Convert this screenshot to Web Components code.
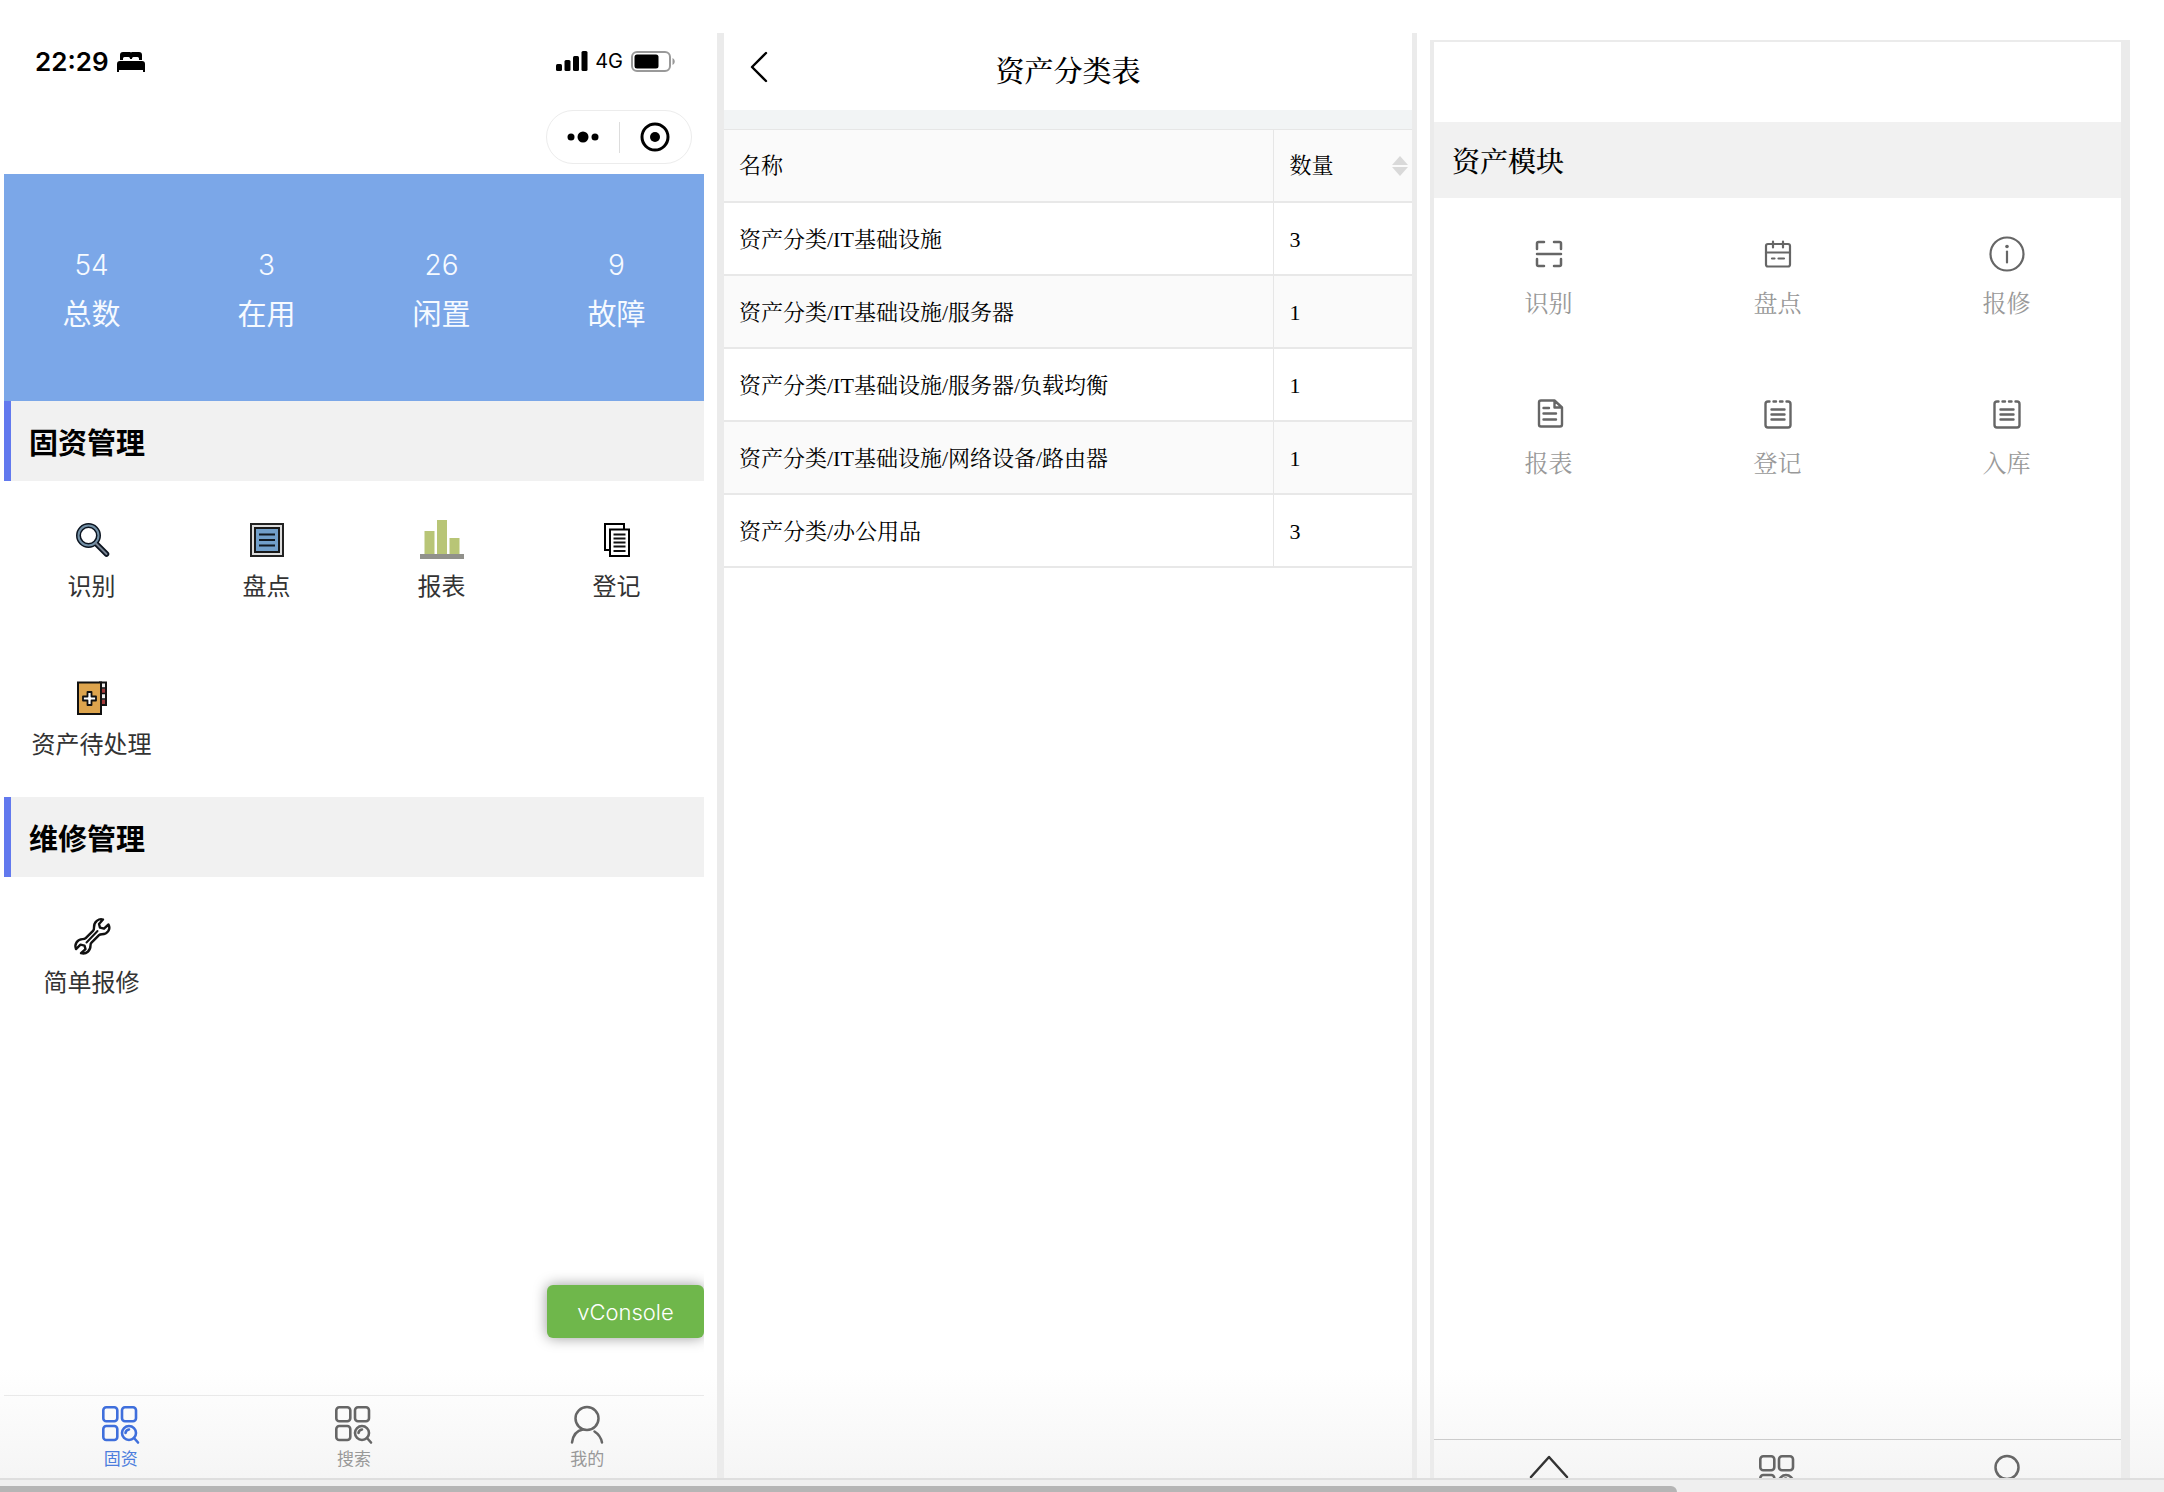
<!DOCTYPE html>
<html lang="zh-CN">
<head>
<meta charset="utf-8">
<title>固资管理</title>
<style>
  html, body { margin: 0; height: 100%; }
  body {
    background: #fff; color: #000; overflow: hidden;
    --sans: "Liberation Sans", "Noto Sans CJK SC", sans-serif;
    --ui: Inter, "Noto Sans CJK SC", sans-serif;
    --serif: "Liberation Serif", "Noto Serif CJK SC", "Noto Sans CJK SC", serif;
    font-family: var(--sans);
  }
</style>
</head>
<body>
<asset-board>
  <phone-home></phone-home>
  <category-report></category-report>
  <asset-modules></asset-modules>
</asset-board>

<script>
const define = (name, html, setup) => {
  const tpl = document.createElement('template');
  tpl.innerHTML = html;
  customElements.define(name, class extends HTMLElement {
    constructor() {
      super();
      this.attachShadow({ mode: 'open' }).append(tpl.content.cloneNode(true));
    }
    connectedCallback() { if (setup) setup(this, this.shadowRoot); }
  });
};

const apps = `<g fill="none" stroke="currentColor" stroke-width="2.6"><rect x="2.300" y="3.300" width="14" height="14" rx="3"/><rect x="21" y="3.300" width="14" height="14" rx="3"/><rect x="2.300" y="22" width="14" height="14" rx="3"/><circle cx="28" cy="29" r="7"/><path d="M33 34l4 4.500M24.500 29a4 4 0 0 1 3.500-3.500" stroke-linecap="round"/></g>`;
const clip = `<g fill="none" stroke="#666" stroke-width="2.400" stroke-linecap="round"><path d="M11.500 7.500H10a2.500 2.500 0 0 0-2.500 2.500v21A2.500 2.500 0 0 0 10 33.500h20a2.500 2.500 0 0 0 2.500-2.500V10A2.500 2.500 0 0 0 30 7.500h-1.500M15.500 7.500h2.500M22 7.500h2.500M13.500 15.500h13M13.500 20.500h13M13.500 25.500h13"/></g>`;
const ICONS = {
  search: `<g fill="none" stroke-linecap="round"><circle cx="16.500" cy="15.500" r="10" stroke="#0b1420" stroke-width="5"/><path d="M24 23.500l10.500 10.500" stroke="#0b1420" stroke-width="5.500"/><circle cx="16.500" cy="15.500" r="10" stroke="#7390a6" stroke-width="2"/><path d="M24 23.500l10.500 10.500" stroke="#778291" stroke-width="2"/></g>`,
  stock: `<rect x="4" y="4" width="32" height="32" fill="#ddd" stroke="#222" stroke-width="2"/><rect x="8" y="8" width="24" height="24" fill="#719fca" stroke="#181818" stroke-width="2"/><path d="M12 14.500h16M12 20h16M12 25.500h16" stroke="#101820" stroke-width="2"/>`,
  bars: `<path d="M2.500 11h10v24h-10zM15 0h10v35H15zM27.500 18h10v17h-10z" fill="#b8c576"/><path d="M-2 34h44v5H-2z" fill="#91918b"/>`,
  copy: `<path d="M8 4h19v26H8z" fill="#fff" stroke="#000" stroke-width="2"/><path d="M13 9.500h19V36H13z" fill="#fff" stroke="#000" stroke-width="2"/><path d="M16.500 14.500h12M16.500 18.500h12M16.500 22.500h12M16.500 26.500h12M16.500 31h12" stroke="#111" stroke-width="2"/>`,
  book: `<path d="M28 4.500h6V27h-6z" fill="#eee" stroke="#111" stroke-width="2"/><path d="M29 10.500h4V15h-4zM29 21.500h4V26h-4z" fill="#a43c3c"/><path d="M28 10h6M28 15.500h6M28 21h6" stroke="#111" stroke-width="1.600"/><path d="M6 4.500h23V36H6z" fill="#dda44d" stroke="#111" stroke-width="2"/><path d="M15.500 14h4v4.500H24v4h-4.500V27h-4v-4.500H11v-4h4.500z" fill="#fff" stroke="#111" stroke-width="1.800" stroke-linejoin="round"/>`,
  wrench: `<g fill="#fff" stroke="#111" stroke-width="2.400" stroke-linejoin="round" stroke-linecap="round"><path d="M31 3.500c-4-1.500-9.500 2.500-9 8 .1 1.500-.2 2.500-1 3.300l-7.300 7.300c-.8.800-1.800 1-3.200 1-5 0-8.500 5-6.500 10l4.500-4.500 4 1 1 3.500-4.500 4c5.500 1.500 9.500-2.500 9.500-7.500 0-1.200.3-2.200 1-2.900l7.500-7.500c.8-.8 1.800-1 3-1 5.500 0 9-5 6.500-9.700l-4.500 4.200-4-1-1-3.700z"/><path d="M14.500 26.500l11-11.500" stroke-width="2"/></g>`,
  apps,
  user: `<g fill="none" stroke="#666" stroke-width="2.500" stroke-linecap="round"><circle cx="20" cy="14.500" r="11.500"/><path d="M5 38.500c1-7.500 5-12 11-13M27.500 27.500c4 2.500 6.500 6 7.500 11"/></g>`,
  scan: `<g fill="none" stroke="#666" stroke-width="2.500" stroke-linecap="round"><path d="M15 8H9.500A1.500 1.500 0 0 0 8 9.500V15M25 8h5.500A1.500 1.500 0 0 1 32 9.500V15M8 25v5.500A1.500 1.500 0 0 0 9.500 32H15M32 25v5.500a1.500 1.500 0 0 1-1.500 1.500H25M8 20h24"/></g>`,
  calendar: `<g fill="none" stroke="#666" stroke-width="2.200" stroke-linecap="round"><rect x="8" y="10" width="24" height="22.500" rx="2"/><path d="M8 18.500h24M15 7.500v6M25 7.500v6M14 24.500h2.500M20.500 24.500h5.500"/></g>`,
  info: `<circle cx="20" cy="20" r="16.500" fill="none" stroke="#666" stroke-width="2.200"/><circle cx="20" cy="12.500" r="1.800" fill="#666"/><path d="M20 17.500v11" stroke="#666" stroke-width="2.200" stroke-linecap="round"/>`,
  report: `<g fill="none" stroke="#666" stroke-width="2.400" stroke-linecap="round" stroke-linejoin="round"><path d="M25.500 6.500H12A2 2 0 0 0 10 8.500v22a2 2 0 0 0 2 2h19a2 2 0 0 0 2-2V13.500zM25.500 6.500v7H33M14.500 14h5.500M14.500 19.500h12.500M14.500 25.500h12.500"/></g>`,
  register: clip, inbound: clip,
  home: `<g fill="none" stroke="#333" stroke-width="2.500" stroke-linecap="round" stroke-linejoin="round"><path d="M2 24L20 4 38 24"/><path d="M5.500 30v10M34.500 30v10"/></g>`,
  bed: `<path d="M3 10V5a3 3 0 0 1 3-3h7a2 2 0 0 1 1 .5A2 2 0 0 1 15 2h7a3 3 0 0 1 3 3v5h-3V8.500A1.500 1.500 0 0 0 20.500 7h-4A1.500 1.500 0 0 0 15 8.500V9h-2v-.5A1.500 1.500 0 0 0 11.500 7h-4A1.500 1.500 0 0 0 6 8.500V10zM3 11h22a3 3 0 0 1 3 3v8h-2v-2H2v2H0v-8a3 3 0 0 1 3-3z"/>`,
  signal: `<rect x="0" y="13" width="6" height="7" rx="1.500"/><rect x="8.500" y="9" width="6" height="11" rx="1.500"/><rect x="17" y="5" width="6" height="15" rx="1.500"/><rect x="25.500" y="0" width="6" height="20" rx="1.500"/>`,
  battery: `<rect x="1" y="1" width="38" height="19" rx="5" fill="none" stroke="#999" stroke-width="2"/><rect x="3.500" y="3.500" width="24" height="14" rx="2.500"/><path d="M41.500 7c3 1.500 3 5.500 0 7z" fill="#999"/>`,
  dots: `<circle cx="4" cy="6" r="3.500"/><circle cx="16" cy="6" r="5.500"/><circle cx="28" cy="6" r="3.500"/>`,
  target: `<circle cx="15" cy="15" r="13" fill="none" stroke="#000" stroke-width="3"/><circle cx="15" cy="15" r="5"/>`,
  back: `<path d="M17 2L3 16l14 14" fill="none" stroke="#000" stroke-width="2.400" stroke-linecap="round" stroke-linejoin="round"/>`
};
const BOX = { bed: [28, 22], signal: [32, 20], battery: [45, 21], dots: [32, 12], target: [30, 30], back: [20, 32] };

define('app-icon', `<style>:host{display:block;flex:none}svg{display:block;overflow:visible}</style><span></span>`, (el, root) => {
  const name = el.getAttribute('name');
  const [w, h] = BOX[name] || [40, 40];
  root.querySelector('span').innerHTML =
    `<svg width="${w}" height="${h}" viewBox="0 0 ${w} ${h}" aria-hidden="true">${ICONS[name]}</svg>`;
});

/* Puts the icon named by the host's "icon" attribute into its .icon box. */
const fillIcon = (el, root) => {
  root.querySelector('.icon').innerHTML = `<app-icon name="${el.getAttribute('icon')}"></app-icon>`;
};

/* An icon over its label, used in every grid of actions. */
define('icon-tile', `
<style>
  :host { display: block; }
  button {
    width: 100%; height: 100%; margin: 0; border: 0; background: none; font: inherit; color: inherit;
    display: flex; flex-direction: column; align-items: center; gap: var(--tile-gap); padding: var(--tile-top) 0 0;
    line-height: 32px;
  }
</style>
<button type="button"><span class="icon"></span><span><slot></slot></span></button>`, fillIcon);

define('tile-grid', `
<style>
  :host {
    display: grid; grid-template-columns: repeat(4, 1fr); grid-auto-rows: 158px;
    --tile-top: 39px; --tile-gap: 11px; font-size: 24px; color: #333;
  }
  :host([wide]) {
    grid-template-columns: repeat(3, 1fr); grid-auto-rows: 160px;
    --tile-top: 36px; --tile-gap: 14px; color: #999;
  }
</style><slot></slot>`);

define('section-title', `
<style>
  :host { display: block; background: #f1f1f1; border-left: 7px solid #6279ee; padding: 6px 0 0 18px; }
  h2 { margin: 0; font-size: 29px; line-height: 74px; font-weight: 700; }
  :host([plain]) { border-left: 0; }
  :host([plain]) h2 { font-size: 28px; line-height: 70px; font-weight: 500; }
</style><h2><slot></slot></h2>`);

define('stat-item', `
<style>
  :host { display: block; text-align: center; font-size: 29px; line-height: 50px; color: #f6faff; }
  .value { font-family: var(--ui); font-size: 28px; font-weight: 300; }
</style>
<div class="value"><slot name="value"></slot></div><div><slot></slot></div>`);

define('tab-item', `
<style>
  :host { display: block; flex: 1; color: #666; }
  a { display: flex; flex-direction: column; align-items: center; gap: 4px; padding-top: 8px; color: inherit; text-decoration: none; }
  .label { font-size: 17px; line-height: 24px; color: #999; }
  :host([active]) { color: #3f6fdc; }
  :host([active]) .label { color: #4c7ddd; }
</style>
<a href="#"><span class="icon"></span><span class="label"><slot></slot></span></a>`, fillIcon);

define('phone-status', `
<style>
  :host { display: flex; align-items: center; gap: 8px; height: 56px; padding: 0 28px 0 31px; font-family: var(--ui); }
  time { font-size: 26px; font-weight: 600; }
  .net { font-size: 20px; margin-left: -1px; }
  app-icon[name=signal] { margin-left: auto; }
</style>
<time>22:29</time><app-icon name="bed"></app-icon>
<app-icon name="signal"></app-icon><span class="net">4G</span><app-icon name="battery"></app-icon>`);

define('capsule-menu', `
<style>
  :host { display: flex; justify-content: flex-end; height: 64px; padding: 21px 12px 0 0; }
  .pill { display: flex; align-items: center; box-sizing: border-box; width: 146px; height: 54px; border: 1px solid #ececec; border-radius: 27px; }
  button { flex: 1; display: flex; justify-content: center; border: 0; padding: 0; background: none; }
  button + button { border-left: 1px solid #ddd; height: 31px; align-items: center; }
</style>
<div class="pill"><button type="button" aria-label="更多"><app-icon name="dots"></app-icon></button><button type="button" aria-label="关闭"><app-icon name="target"></app-icon></button></div>`);

define('phone-home', `
<style>
  :host { display: flex; flex-direction: column; position: relative; overflow: hidden; }
  .stats { display: grid; grid-template-columns: repeat(4, 1fr); align-content: start; box-sizing: border-box; height: 227px; padding-top: 66px; background: #7ba7e8; }
  nav { display: flex; margin-top: auto; height: 82px; border-top: 1px solid #e9e9e9; }
  .console {
    position: absolute; right: 0; bottom: 140px; width: 157px; height: 53px; padding: 0;
    border: 0; border-radius: 6px; background: #6fb74b; color: #fff; font: 300 22px var(--ui);
    box-shadow: 0 0 14px rgba(0,0,0,.4);
  }
</style>
<phone-status></phone-status>
<capsule-menu></capsule-menu>
<div class="stats">
  <stat-item><span slot="value">54</span>总数</stat-item>
  <stat-item><span slot="value">3</span>在用</stat-item>
  <stat-item><span slot="value">26</span>闲置</stat-item>
  <stat-item><span slot="value">9</span>故障</stat-item>
</div>
<section-title>固资管理</section-title>
<tile-grid>
  <icon-tile icon="search">识别</icon-tile>
  <icon-tile icon="stock">盘点</icon-tile>
  <icon-tile icon="bars">报表</icon-tile>
  <icon-tile icon="copy">登记</icon-tile>
  <icon-tile icon="book">资产待处理</icon-tile>
</tile-grid>
<section-title>维修管理</section-title>
<tile-grid><icon-tile icon="wrench">简单报修</icon-tile></tile-grid>
<nav>
  <tab-item icon="apps" active>固资</tab-item>
  <tab-item icon="apps">搜索</tab-item>
  <tab-item icon="user">我的</tab-item>
</nav>
<button class="console" type="button">vConsole</button>`);

define('category-report', `
<style>
  :host { display: block; border: solid #ebebeb; border-width: 0 5px 0 7px; font-family: var(--serif); }
  header { display: grid; grid-template-columns: 60px 1fr 60px; align-items: center; height: 77px; }
  header button { border: 0; background: none; padding: 0 0 10px 25px; }
  h1 { margin: 0; text-align: center; font-size: 29px; line-height: 40px; font-weight: 500; }
  .band { height: 19px; background: #f2f4f5; }
  table { width: 100%; border-collapse: separate; border-spacing: 0; border-top: 1px solid #e6e6e6; table-layout: fixed; font-size: 22px; line-height: 32px; }
  th, td { box-sizing: border-box; height: 73px; padding: 2px 15px 0; text-align: left; font-weight: 400; border-bottom: 2px solid #e8e8e8; }
  th { padding-top: 0; background: #fafafa; }
  th:first-child, td:first-child { border-right: 1px solid #e6e6e6; }
  tbody tr:nth-child(even) { background: #fafafa; }
  .count { width: 20%; padding-right: 4px; }
  .sort { display: flex; justify-content: space-between; align-items: center; }
</style>
<header><button type="button" aria-label="返回"><app-icon name="back"></app-icon></button><h1>资产分类表</h1></header>
<div class="band"></div>
<table>
  <thead><tr><th scope="col">名称</th><th scope="col" class="count"><div class="sort">数量<svg width="16" height="20" viewBox="0 0 16 20" aria-hidden="true"><path d="M8 0l8 9H0zM8 20l8-9H0z" fill="#d9d9d9"/></svg></div></th></tr></thead>
  <tbody>
    <tr><td>资产分类/IT基础设施</td><td>3</td></tr>
    <tr><td>资产分类/IT基础设施/服务器</td><td>1</td></tr>
    <tr><td>资产分类/IT基础设施/服务器/负载均衡</td><td>1</td></tr>
    <tr><td>资产分类/IT基础设施/网络设备/路由器</td><td>1</td></tr>
    <tr><td>资产分类/办公用品</td><td>3</td></tr>
  </tbody>
</table>`);

define('asset-modules', `
<style>
  :host { display: flex; flex-direction: column; margin-top: 7px; overflow: hidden; border: solid #ebebeb; border-width: 2px 9px 0 4px; font-family: var(--serif); }
  .top { height: 80px; }
  nav { display: flex; margin-top: auto; height: 38px; border-top: 1px solid #ccc; }
  nav a { flex: 1; display: flex; justify-content: center; padding-top: 13px; color: #666; }
</style>
<div class="top"></div>
<section-title plain>资产模块</section-title>
<tile-grid wide>
  <icon-tile icon="scan">识别</icon-tile>
  <icon-tile icon="calendar">盘点</icon-tile>
  <icon-tile icon="info">报修</icon-tile>
  <icon-tile icon="report">报表</icon-tile>
  <icon-tile icon="register">登记</icon-tile>
  <icon-tile icon="inbound">入库</icon-tile>
</tile-grid>
<nav>
  <a href="#" aria-label="首页"><app-icon name="home"></app-icon></a>
  <a href="#" aria-label="搜索"><app-icon name="apps"></app-icon></a>
  <a href="#" aria-label="我的"><app-icon name="user"></app-icon></a>
</nav>`);

define('asset-board', `
<style>
  :host { display: flex; flex-direction: column; height: 100vh; }
  main {
    flex: 1; min-height: 0; display: grid; grid-template-columns: repeat(3, minmax(0, 1fr)); gap: 13px;
    margin-top: 33px; padding: 0 34px 0 4px; overflow: hidden;
    background: linear-gradient(to top, #f5f5f5, #fff 110px);
  }
  .track { height: 12px; border-top: 2px solid #dedede; background: #efefef; display: flex; align-items: flex-end; }
  .thumb { width: 77.5%; height: 6px; background: #b5b5b5; border-top-right-radius: 6px; }
</style>
<main><slot></slot></main>
<div class="track"><div class="thumb"></div></div>`);
</script>
</body>
</html>
